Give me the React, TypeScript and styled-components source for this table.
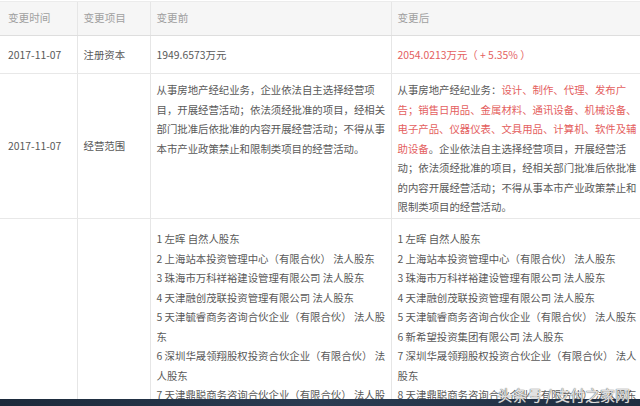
import React from "react";
import styled, { createGlobalStyle } from "styled-components";

const GlobalStyle = createGlobalStyle`
  html, body {
    margin: 0;
    padding: 0;
    background: #fff;
  }
  body {
    font-family: "Noto Sans CJK SC", "Noto Sans", sans-serif;
  }
`;

const red = "#e4605e";

const beforeScope = [
  "从事房地产经纪业务，企业依法自主选择经营项",
  "目，开展经营活动；依法须经批准的项目，经相关",
  "部门批准后依批准的内容开展经营活动；不得从事",
  "本市产业政策禁止和限制类项目的经营活动。",
];

const beforeHolders = [
  "1 左晖 自然人股东",
  "2 上海站本投资管理中心（有限合伙） 法人股东",
  "3 珠海市万科祥裕建设管理有限公司 法人股东",
  "4 天津融创茂联投资管理有限公司 法人股东",
  "5 天津毓睿商务咨询合伙企业（有限合伙） 法人股",
  "东",
  "6 深圳华晟领翔股权投资合伙企业（有限合伙） 法",
  "人股东",
  "7 天津鼎聪商务咨询合伙企业（有限合伙） 法人股",
];

const afterHolders = [
  "1 左晖 自然人股东",
  "2 上海站本投资管理中心（有限合伙） 法人股东",
  "3 珠海市万科祥裕建设管理有限公司 法人股东",
  "4 天津融创茂联投资管理有限公司 法人股东",
  "5 天津毓睿商务咨询合伙企业（有限合伙） 法人股东",
  "6 新希望投资集团有限公司 法人股东",
  "7 深圳华晟领翔股权投资合伙企业（有限合伙） 法人",
  "股东",
  "8 天津鼎聪商务咨询合伙企业（有限合伙） 法人股东",
];

const App = () => {
  return (
    <Page>
      <GlobalStyle />
      <TableArea>
        <Table>
          <colgroup>
            <col style={{ width: 77 }} />
            <col style={{ width: 73 }} />
            <col style={{ width: 241 }} />
            <col style={{ width: 249 }} />
          </colgroup>
          <thead>
            <tr>
              <HeadCell>变更时间</HeadCell>
              <HeadCell>变更项目</HeadCell>
              <HeadCell>变更前</HeadCell>
              <HeadCell>变更后</HeadCell>
            </tr>
          </thead>
          <tbody>
            <Row $height={38}>
              <Cell>2017-11-07</Cell>
              <Cell>注册资本</Cell>
              <Cell>1949.6573万元</Cell>
              <Cell>
                <Red>2054.0213万元（ + 5.35% ）</Red>
              </Cell>
            </Row>
            <Row $height={145}>
              <Cell>2017-11-07</Cell>
              <Cell>经营范围</Cell>
              <Cell $top $padTop={6}>
                {beforeScope.map((l) => (
                  <Line key={l}>{l}</Line>
                ))}
              </Cell>
              <Cell $top $padTop={6}>
                <Line>
                  从事房地产经纪业务：<Red>设计、制作、代理、发布广</Red>
                </Line>
                <Line>
                  <Red>告；销售日用品、金属材料、通讯设备、机械设备、</Red>
                </Line>
                <Line>
                  <Red>电子产品、仪器仪表、文具用品、计算机、软件及辅</Red>
                </Line>
                <Line>
                  <Red>助设备</Red>。企业依法自主选择经营项目，开展经营活
                </Line>
                <Line>动；依法须经批准的项目，经相关部门批准后依批准</Line>
                <Line>的内容开展经营活动；不得从事本市产业政策禁止和</Line>
                <Line>限制类项目的经营活动。</Line>
              </Cell>
            </Row>
            <Row $height={200}>
              <Cell />
              <Cell />
              <Cell $top $padTop={10}>
                {beforeHolders.map((l, i) => (
                  <Line key={i}>{l}</Line>
                ))}
              </Cell>
              <Cell $top $padTop={10}>
                {afterHolders.map((l, i) => (
                  <Line key={i}>{l}</Line>
                ))}
              </Cell>
            </Row>
          </tbody>
        </Table>
      </TableArea>
      <Taskbar />
      <Watermark>头条号 / 支付之家网</Watermark>
    </Page>
  );
};

export default App;

const Page = styled.div`
  position: relative;
  width: 640px;
  height: 406px;
  display: flex;
  flex-direction: column;
  overflow: hidden;
  background: #fff;
`;

const TableArea = styled.div`
  flex: 1;
  min-height: 0;
  overflow: hidden;
  padding-top: 1px;
`;

const Table = styled.table`
  width: 640px;
  table-layout: fixed;
  border-collapse: collapse;
  font-size: 10.4px;
  color: #595959;
`;

const HeadCell = styled.th`
  height: 31px;
  padding: 0 0 2px 6px;
  text-align: left;
  font-size: 10.6px;
  font-weight: normal;
  color: #a0a0a0;
  background: #f6f6f6;
  border-top: 1px solid #ececec;
  border-bottom: 1px solid #dedede;
  border-left: 1px solid #e6e6e6;
  white-space: nowrap;

  &:first-child {
    border-left: none;
    padding-left: 8px;
  }
`;

const Row = styled.tr<{ $height: number }>`
  height: ${(p) => p.$height}px;
`;

const Cell = styled.td<{ $top?: boolean; $padTop?: number }>`
  padding: ${(p) => (p.$top ? `${p.$padTop ?? 0}px 0 0 6px` : "0 0 0 6px")};
  vertical-align: ${(p) => (p.$top ? "top" : "middle")};
  line-height: 19.5px;
  border-bottom: 1px solid #e8e8e8;
  border-left: 1px solid #e6e6e6;
  white-space: nowrap;
  overflow: hidden;

  &:first-child {
    border-left: none;
    padding-left: 8px;
  }
`;

const Line = styled.div`
  white-space: nowrap;
  line-height: 19.5px;
`;

const Red = styled.span`
  color: ${red};
`;

const Watermark = styled.div`
  position: absolute;
  right: 10px;
  bottom: 2px;
  font-size: 15px;
  line-height: 18px;
  color: rgba(255, 255, 255, 0.8);
  text-shadow: 0 0 1px #6a6a6a, 0 0 1px #6a6a6a;
  white-space: nowrap;
`;

const Taskbar = styled.div`
  height: 7px;
  flex-shrink: 0;
  background: linear-gradient(to right, #1c2a3b, #2a3c52 50%, #1e2d40);
`;
